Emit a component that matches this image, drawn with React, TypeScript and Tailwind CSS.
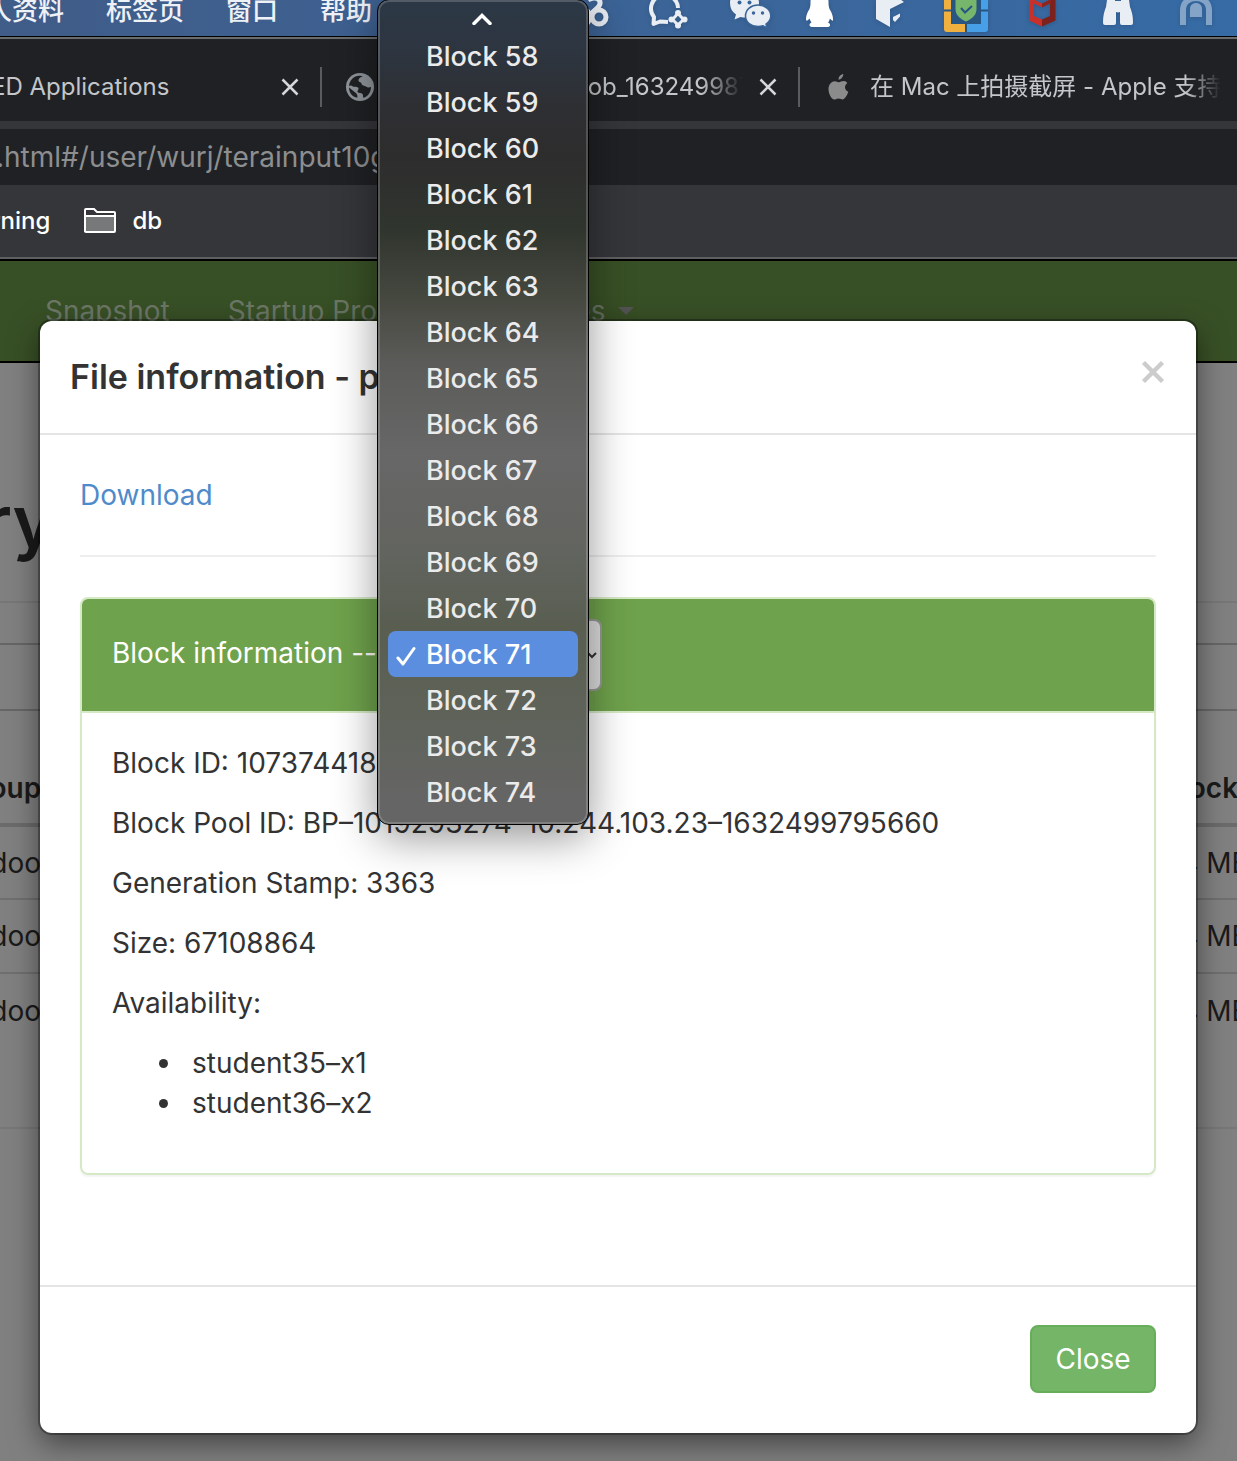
import React from "react";

const blocks = Array.from({ length: 17 }, (_, i) => 58 + i);

function LoopIcon() {
  return (
    <svg viewBox="571 0 40 36" className="h-9 w-10 shrink-0" fill="none" stroke="#e9edf4" strokeWidth="5">
      <circle cx="599" cy="17" r="7" />
      <path d="M591 14C595 9 601 7 600 2C599 -3 592 -3 588 0" />
      <circle cx="582" cy="17" r="8" />
    </svg>
  );
}

function ChatSparkIcon() {
  return (
    <svg viewBox="647 0 42 36" className="h-9 w-[42px] shrink-0" fill="none" stroke="#e9edf4" strokeWidth="4">
      <path d="M678 8A13.500 13.500 0 1 0 654 17L653.500 24L660 21.500L668 22" strokeLinejoin="round" />
      <path d="M678 13.500L683.500 19.500L678 25L672.500 19.500Z" strokeWidth="3" />
      <g fill="#e9edf4" stroke="none">
        <circle cx="678" cy="13" r="3" />
        <circle cx="684.500" cy="19.500" r="3" />
        <circle cx="678" cy="25.500" r="3" />
        <circle cx="671.500" cy="19.500" r="3" />
      </g>
    </svg>
  );
}

function BubblesIcon() {
  return (
    <svg viewBox="725 0 45 36" className="h-9 w-[45px] shrink-0 overflow-visible">
      <path fill="#e9edf4" d="M744 -10C736 -10 730 -4.500 730 3C730 8 732 12 736 14.500L734.500 19.500L740.500 17C742 17.500 744 17.500 746 17.500C752 17 759 11 759 3C759 -4.500 752 -10 744 -10Z" />
      <path fill="#e9edf4" stroke="#396599" strokeWidth="1.500" d="M758 5C751 5 745.500 9.500 745.500 16C745.500 22 751 26.500 758 26.500C760 26.500 761.500 26.200 763 25.800L767 28L766 24C769 22 770.800 19.500 770.800 16C770.800 9.500 765 5 758 5Z" />
      <g fill="#396599">
        <circle cx="739.500" cy="2.500" r="2" />
        <circle cx="749.500" cy="2.500" r="2" />
        <circle cx="753.500" cy="13" r="1.700" />
        <circle cx="762.500" cy="13" r="1.700" />
      </g>
    </svg>
  );
}

function PenguinIcon() {
  return (
    <svg viewBox="806 0 32 36" className="h-9 w-8 shrink-0" fill="#ffffff">
      <path d="M819.500 -8C813 -8 810.500 -3 810.500 2C810.500 4 810.500 6 809.500 9C807 13 806 16 806 19C806 21.500 807.500 21 809.500 18.500C809.800 20 811 21.500 811.500 22.500C809 23.500 808.500 26.500 812 27H828C831 26.500 830.500 23.500 828 22.500C829 21.500 829.500 20 830 18.500C832 21 833.300 21.500 833 19C833 16 832 13 829.500 9C828.500 6 828.500 4 828.500 2C828.500 -3 826 -8 819.500 -8Z" />
    </svg>
  );
}

function CubeIcon() {
  return (
    <svg viewBox="874 0 34 36" className="h-9 w-[34px] shrink-0" fill="#e9edf4">
      <path d="M876 -1L890 -8L904 2L890 9V27L876 19Z" />
      <path d="M893 17L900 13.500V16.500L895 22L893 20Z" />
    </svg>
  );
}

function ShieldIcon() {
  return (
    <svg viewBox="944 0 46 36" className="h-9 w-[46px] shrink-0">
      <path fill="#f0b040" d="M944 -4H966V9H951V24H965.500V32H947Q944 32 944 29Z" />
      <path fill="#479fe8" d="M966 -4H988V29Q988 32 985 32H966.500V24H981V9H966Z" />
      <rect x="951" y="-4" width="30" height="28" fill="#285581" />
      <path stroke="#285581" strokeWidth="2" d="M944 10.500H951M981 10.500H988M966 24V32" />
      <path fill="#76b56c" d="M955.500 0H976.500V9C976.500 15 972 19 966 21.500C960 19 955.500 15 955.500 9Z" />
      <path fill="none" stroke="#285581" strokeWidth="2" d="M961 8L965 12.500L972 6" />
    </svg>
  );
}

function RedShieldIcon() {
  return (
    <svg viewBox="1026 0 36 36" className="h-9 w-9 shrink-0">
      <path fill="#c9302a" d="M1029 -4L1034 -1V16L1042 19.500V26.500L1029 20.500Z" />
      <path fill="#7d211c" d="M1055.500 -4L1050 -1V16L1042 19.500V26.500L1055.500 20.500Z" />
      <path fill="#c9302a" d="M1033 -1L1042 3.500V7.500L1033 3Z" />
      <path fill="#8f241f" d="M1051 -1L1042 3.500V7.500L1051 3Z" />
    </svg>
  );
}

function BinocularsIcon() {
  return (
    <svg viewBox="1098 0 40 36" className="h-9 w-10 shrink-0" fill="#e9edf4">
      <path d="M1107 0H1115V3L1116 7V23Q1116 25 1114 25H1105Q1103 25 1103 23C1103 16 1104 12 1106 7Z" />
      <path d="M1129 0H1121V3L1120 7V23Q1120 25 1122 25H1131Q1133 25 1133 23C1133 16 1132 12 1130 7Z" />
      <path d="M1114 1H1122V10Q1118 15 1114 10Z" />
    </svg>
  );
}

function ArchIcon() {
  return (
    <svg viewBox="1174 0 44 36" className="h-9 w-11 shrink-0">
      <path fill="none" stroke="#83a4c7" strokeWidth="6" d="M1183 25V10C1183 -6 1209 -6 1209 10V25" />
      <path fill="#83a4c7" d="M1190 17V9C1190 1 1202 1 1202 9V17Z" />
    </svg>
  );
}

function Cross() {
  return (
    <svg viewBox="0 0 18 18" className="size-[18px]" fill="none" stroke="#d5d7da" strokeWidth="2.500">
      <path d="M1.500 1.500L16.500 16.500M16.500 1.500L1.500 16.500" />
    </svg>
  );
}

function GlobeIcon() {
  return (
    <svg viewBox="0 0 28 28" className="size-7 shrink-0">
      <circle cx="14" cy="14" r="14" fill="#8f959b" />
      <path fill="#202124" d="M17 3.200C15 4 12.500 5 12.500 7.500C12.500 9.500 15 8.500 15.500 10.500C16 13 18.500 12.500 20 13.500C21.500 15 23.500 14.500 25 14C25 19 22 23.500 17.500 24.800C16.500 24 17.500 22.500 16.500 21C15.500 19.500 12.500 20.500 11.500 19C11 17.500 13 16.500 12.500 15C11.500 13.200 8.500 14.500 7 13.500C5.500 12.500 4.500 12 3 13C3.500 7 8 2.500 14 2.800Z" />
      <path fill="#8f959b" d="M3 14C5.500 15.500 9 15.500 9.500 18.500C10 20.500 11.500 21 11.500 24.800C6.500 24 3 20 3 14Z" />
      <path fill="#202124" d="M3 14.500L10.500 20.500Q11.500 22 11.500 24.800C6.500 24 3 20 3 14.500Z" />
    </svg>
  );
}

function AppleIcon() {
  return (
    <svg viewBox="0 0 22 26" className="h-[26px] w-[22px] shrink-0" fill="#8b8b8b">
      <path d="M15.300 0C15.500 2.200 13.200 5.700 10.500 5.600C10.200 3 12.600 .4 15.300 0Z" />
      <path d="M19.300 9.200C16 11.200 16.300 16 20.300 17.800C19.500 20.300 17.300 25 14.800 25.400C13.200 25.500 12.500 24.400 10.500 24.400C8.500 24.400 7.900 25.500 6.300 25.500C3.500 25.300 .5 19.700 .5 15.200C.5 10.200 3.700 7.300 6.800 7.200C8.500 7.200 9.800 8.300 11 8.300C12.100 8.300 13.700 7 16 7.100C17.300 7.200 18.600 7.900 19.300 9.200Z" />
    </svg>
  );
}

function FolderIcon() {
  return (
    <svg viewBox="0 0 32 26" className="h-[26px] w-8 shrink-0">
      <path d="M2 8H30V23H2Z" fill="#77787a" />
      <path d="M1 24V2Q1 1 2 1H10L13 4H30Q31 4 31 5V23Q31 24 30 24H2Q1 24 1 23M1 8H31" fill="none" stroke="#ffffff" strokeWidth="2" />
    </svg>
  );
}

function Row({ children }: { children: React.ReactNode }) {
  return <p className="mb-5">{children}</p>;
}

export default function App() {
  return (
    <div className="relative flex min-h-screen flex-col overflow-hidden font-['Inter','Noto_Sans_CJK_SC',sans-serif]">
      <header className="flex h-9 items-center justify-between overflow-hidden bg-linear-to-r from-[#405c88] to-[#366ba5] pr-[19px] text-white">
        <nav className="-mt-[14px] -ml-10 flex gap-[42px] text-[26px] leading-9 font-medium whitespace-nowrap text-[#eef1f6]">
          <span>个人资料</span>
          <span>标签页</span>
          <span>窗口</span>
          <span>帮助</span>
        </nav>
        <div className="flex shrink-0 gap-9 drop-shadow-sm">
          <LoopIcon />
          <ChatSparkIcon />
          <BubblesIcon />
          <PenguinIcon />
          <CubeIcon />
          <ShieldIcon />
          <RedShieldIcon />
          <BinocularsIcon />
          <ArchIcon />
        </div>
      </header>

      <div className="h-[3px] border-t border-black bg-[#6a6c6d]" />
      <div className="flex h-[82px] items-center overflow-hidden bg-[#202124] pt-[14px] text-2xl whitespace-nowrap text-[#c3c6ca]">
        <div className="flex w-[322px] shrink-0 items-center justify-between border-r-2 border-[#5a5c60] py-1 pr-[21px]">
          <span className="-ml-[9px]">ED Applications</span>
          <button aria-label="Close tab"><Cross /></button>
        </div>
        <div className="flex w-[478px] shrink-0 items-center border-r-2 border-[#5a5c60] py-1 pr-[21px] pl-6">
          <GlobeIcon />
          <span className="mr-4 ml-4 flex-1 overflow-hidden mask-r-from-88% mask-r-to-100%">MapReduce Job job_1632499871</span>
          <button aria-label="Close tab"><Cross /></button>
        </div>
        <div className="flex min-w-0 flex-1 items-center pr-4 pl-7">
          <AppleIcon />
          <span className="ml-5 flex-1 overflow-hidden mask-r-from-90% mask-r-to-100%">在 Mac 上拍摄截屏 - Apple 支持</span>
        </div>
      </div>
      <div className="h-2 bg-[#35363a]" />
      <div className="flex h-14 items-center bg-[#202124] text-[28px] whitespace-nowrap text-[#8d8e90]">
        <span className="-ml-1">.html#/user/wurj/terainput10g</span>
      </div>
      <div className="flex h-[76px] items-center border-b-2 border-black bg-[#35363a] pb-[2px] text-2xl font-medium text-white shadow-[inset_0_-2px_0_#5f6063]">
        <a href="#learning" className="-ml-[43px]">learning</a>
        <a href="#db" className="ml-[34px] flex items-center gap-4"><FolderIcon />db</a>
      </div>

      <div className="grid flex-1 grid-cols-1 text-[28px] leading-10">
        <main className="min-w-0 bg-[#808080] text-[#1a1a1a] [grid-area:1/1]">
          <nav className="flex h-[102px] items-center gap-[58px] border-b-2 border-black bg-[#385026] pl-[45px] whitespace-nowrap text-[#6c7766]">
            <a href="#snapshot">Snapshot</a>
            <a href="#startup">Startup Progress</a>
            <a href="#utilities" className="flex items-center gap-3">
              Utilities
              <span className="border-x-8 border-t-8 border-x-transparent border-t-[#555]" />
            </a>
          </nav>
          <h1 className="-ml-[546px] pt-[118px] text-[72px] leading-[80px] font-semibold whitespace-nowrap">Browse Directory</h1>
          <div className="mt-10 border-t-2 border-[#777]" />
          <div className="mt-10 h-[68px] border-y-2 border-[#666]" />
          <div className="-mr-20 -ml-[42px]">
            <table className="w-full text-left">
              <thead>
                <tr className="h-[114px] border-b-4 border-[#6b6b6b] align-bottom">
                  <th className="pb-[15px] font-semibold">Group</th>
                  <th className="w-[174px] pb-[15px] pl-5 font-semibold whitespace-nowrap">Block Size</th>
                </tr>
              </thead>
              <tbody>
                {[0, 1, 2].map((n) => (
                  <tr key={n} className="h-[74px] border-b-2 border-[#6f6f6f] last:border-b-0">
                    <td>hadoop</td>
                    <td className="pl-5 whitespace-nowrap">64 MB</td>
                  </tr>
                ))}
              </tbody>
            </table>
          </div>
          <div className="mt-20 border-t-2 border-[#777]" />
        </main>

        <section
          role="dialog"
          aria-label="File information"
          className="z-10 mx-10 mt-[60px] mr-[41px] mb-7 self-start rounded-xl bg-white text-[#333] shadow-[0_0_0_2px_rgba(0,0,0,0.3),0_10px_30px_rgba(0,0,0,0.5)] [grid-area:1/1]"
        >
          <div className="flex justify-between border-b-2 border-[#e5e5e5] px-[30px] py-[30px]">
            <h4 className="text-[34px] leading-[52px] font-semibold whitespace-nowrap">File information - part</h4>
            <button aria-label="Close dialog" className="mr-px flex h-[42px] items-center">
              <svg viewBox="0 0 24 24" className="size-6" fill="none" stroke="#ccc" strokeWidth="4.500">
                <path d="M2.500 2.500L21.500 21.500M21.500 2.500L2.500 21.500" />
              </svg>
            </button>
          </div>
          <div className="px-10 pt-10 pb-[110px]">
            <a href="#download" className="text-[#4f8bca]">Download</a>
            <hr className="my-10 border-t-2 border-[#eee]" />
            <div className="rounded-lg border-2 border-[#d6e9c6] shadow-[0_2px_2px_rgba(0,0,0,0.05)]">
              <div className="flex h-[114px] items-center rounded-t-md border-b-2 border-[#d6e9c6] bg-[#6fa24c] px-[30px] text-white">
                <label htmlFor="block" className="-mt-1 w-[278px] shrink-0 whitespace-nowrap">Block information --</label>
                <select
                  id="block"
                  defaultValue="71"
                  className="h-[72px] w-[212px] rounded-lg border-2 border-[#999] bg-[#dedede] px-2 text-[#333]"
                >
                  {blocks.map((b) => (
                    <option key={b} value={b}>Block {b}</option>
                  ))}
                </select>
              </div>
              <div className="px-[30px] pt-[30px] pb-[30px]">
                <Row>Block ID: 1073744187</Row>
                <Row>Block Pool ID: BP–1019293274–10.244.103.23–1632499795660</Row>
                <Row>Generation Stamp: 3363</Row>
                <Row>Size: 67108864</Row>
                <Row>Availability:</Row>
                <ul className="mb-5 list-disc pl-[72px]">
                  <li className="pl-2">student35–x1</li>
                  <li className="pl-2">student36–x2</li>
                </ul>
              </div>
            </div>
          </div>
          <div className="flex justify-end border-t-2 border-[#e5e5e5] px-10 pt-[38px] pb-10">
            <button className="h-[68px] w-[126px] rounded-lg border-2 border-[#67ae5b] bg-[#75b567] text-white">Close</button>
          </div>
        </section>
      </div>

      <div
        role="listbox"
        aria-label="Blocks"
        className="absolute -top-px left-[377px] z-20 w-[212px] rounded-xl border border-black bg-[linear-gradient(180deg,#2c3846_0%,#2d3540_6%,#2e2f33_13%,#2d2d2d_19%,#30352e_28%,#45483f_36%,#5b5b59_44%,#676767_55%,#62645f_67%,#595e51_76%,#5e6258_86%,#656565_97%)] px-[10px] pb-[9px] text-[27px] font-medium text-[#ebebeb] shadow-[inset_0_0_0_2px_rgba(255,255,255,0.18),0_12px_44px_rgba(0,0,0,0.42)]"
      >
        <div className="flex h-[33px] items-center justify-center pt-1">
          <svg viewBox="0 0 20 12" className="mr-[2px] h-3 w-5" fill="none" stroke="#fff" strokeWidth="3.500">
            <path d="M2 10.500L10 2.500L18 10.500" strokeLinecap="round" />
          </svg>
        </div>
        {blocks.map((b) =>
          b === 71 ? (
            <button key={b} role="option" aria-selected="true" className="flex h-[46px] w-full items-center rounded-lg bg-[#5c8ee0] pt-[3px] pl-2 text-left text-white">
              <svg viewBox="0 0 20 20" className="mr-[10px] h-5 w-5" fill="none" stroke="#fff" strokeWidth="3" strokeLinecap="round" strokeLinejoin="round">
                <path d="M2 12L7 18L18 2.500" />
              </svg>
              Block {b}
            </button>
          ) : (
            <button key={b} role="option" aria-selected="false" className="flex h-[46px] w-full items-center pt-[3px] pl-[38px] text-left">
              Block {b}
            </button>
          ),
        )}
      </div>
    </div>
  );
}
